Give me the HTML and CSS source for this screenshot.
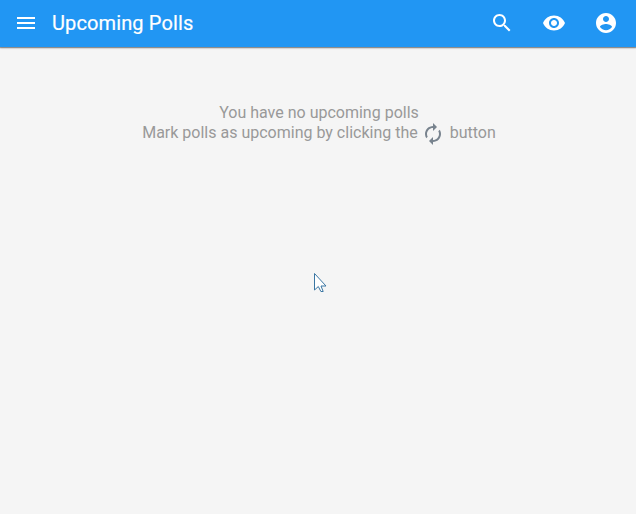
FILE: index.html
```html
<!DOCTYPE html>
<html lang="en">
<head>
<meta charset="utf-8">
<title>Upcoming Polls</title>
<link rel="stylesheet" href="styles.css">
</head>
<body>
<header class="toolbar">
  <svg class="icon" viewBox="0 0 24 24"><path d="M3 18h18v-2H3v2zm0-5h18v-2H3v2zm0-7v2h18V6H3z"/></svg>
  <h1 class="title">Upcoming Polls</h1>
  <nav class="actions">
    <svg class="icon" viewBox="0 0 24 24"><path d="M15.5 14h-.79l-.28-.27C15.41 12.59 16 11.11 16 9.5 16 5.91 13.09 3 9.5 3S3 5.91 3 9.5 5.91 16 9.5 16c1.61 0 3.09-.59 4.23-1.57l.27.28v.79l5 4.99L20.49 19l-4.99-5zm-6 0C7.01 14 5 11.99 5 9.5S7.01 5 9.5 5 14 7.01 14 9.5 11.99 14 9.5 14z"/></svg>
    <svg class="icon" viewBox="0 0 24 24"><path d="M12 4.5C7 4.5 2.73 7.61 1 12c1.73 4.39 6 7.5 11 7.5s9.27-3.11 11-7.5c-1.73-4.39-6-7.5-11-7.5zM12 17c-2.76 0-5-2.24-5-5s2.24-5 5-5 5 2.24 5 5-2.24 5-5 5zm0-8c-1.66 0-3 1.34-3 3s1.34 3 3 3 3-1.34 3-3-1.34-3-3-3z"/></svg>
    <svg class="icon" viewBox="0 0 24 24"><path d="M12 2C6.48 2 2 6.48 2 12s4.48 10 10 10 10-4.48 10-10S17.52 2 12 2zm0 3c1.66 0 3 1.34 3 3s-1.34 3-3 3-3-1.34-3-3 1.34-3 3-3zm0 14.2c-2.5 0-4.71-1.28-6-3.22.03-1.99 4-3.08 6-3.08 1.99 0 5.97 1.09 6 3.08-1.29 1.94-3.5 3.22-6 3.22z"/></svg>
  </nav>
</header>
<main class="empty">
  <p class="line">You have no upcoming polls</p>
  <p class="line">Mark polls as upcoming by clicking the <svg class="icon inline" viewBox="0 0 24 24"><path d="M12 6v3l4-4-4-4v3c-4.42 0-8 3.58-8 8 0 1.57.46 3.03 1.24 4.26L6.7 14.8c-.45-.83-.7-1.79-.7-2.8 0-3.31 2.69-6 6-6zm6.76 1.74L17.3 9.2c.44.84.7 1.79.7 2.8 0 3.31-2.69 6-6 6v-3l-4 4 4 4v-3c4.42 0 8-3.58 8-8 0-1.57-.46-3.03-1.24-4.26z"/></svg> button</p>
</main>
<svg class="cursor" viewBox="0 0 14 21"><path d="M1.5 1.5v16.5l3.8-3.5 2.6 5h2.3l-2.2-5.5h5z"/></svg>
</body>
</html>
```
FILE: styles.css
```css
body {
  margin: 0;
  min-height: 514px;
  background: #f5f5f5;
  font-family: Roboto, sans-serif;
  overflow: hidden;
}
.toolbar {
  display: flex;
  align-items: center;
  box-sizing: border-box;
  height: 47px;
  padding: 0 18px 1px 14px;
  background: #2196f3;
  color: #fff;
  box-shadow: 0 1px 1px rgba(0, 0, 0, .32), 0 1px 2px rgba(0, 0, 0, .22);
}
.icon {
  width: 24px;
  height: 24px;
  fill: currentColor;
  flex: none;
}
.title {
  margin: 0 0 0 14px;
  font-size: 20px;
  font-weight: 400;
  line-height: 24px;
  letter-spacing: .12px;
  -webkit-text-stroke: .2px currentColor;
}
.actions {
  display: flex;
  gap: 28px;
  margin-left: auto;
}
.empty {
  padding-top: 56px;
  padding-left: 2px;
  color: #999;
  font-size: 16px;
  line-height: 20px;
}
.line {
  display: flex;
  justify-content: center;
  height: 20px;
  margin: 0;
}
.inline {
  margin: -1px 4.5px 0 3.5px;
  color: #78838e;
}
.cursor {
  position: absolute;
  left: 313px;
  top: 272px;
  width: 14px;
  height: 21px;
  fill: #fff;
  stroke: #3a76a3;
}
```
